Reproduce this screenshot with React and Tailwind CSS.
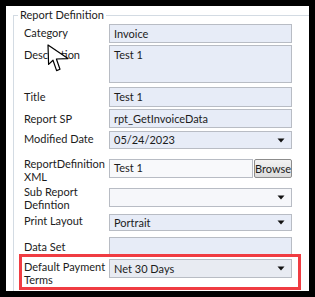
import React from 'react'

const font = { fontFamily: 'Lato, "Noto Sans", sans-serif' }

function Caret() {
  return (
    <svg width="8" height="5" viewBox="0 0 8 5" className="shrink-0">
      <path d="M0.5 0.5 L7.5 0.5 L4 4.5 Z" fill="#111" />
    </svg>
  )
}

function Field({ value, h = 'h-[19px]', bg = 'bg-[#e7ecf7]', dropdown }) {
  return (
    <div className={`flex w-[183px] items-center border border-[#b8bcc4] ${h} ${bg} pl-[4px] pr-[6px] text-[11px] text-[#1c1c1c]`}>
      <span className="flex-1 whitespace-nowrap leading-[14px]">{value}</span>
      {dropdown && <Caret />}
    </div>
  )
}

function Row({ label, labelClass = 'pt-[3px]', className = '', children }) {
  return (
    <div className={`flex ${className}`}>
      <div className={`w-[85px] shrink-0 whitespace-nowrap text-[11px] leading-[12.5px] text-[#1c1c1c] ${labelClass}`}>{label}</div>
      {children}
    </div>
  )
}

function Cursor() {
  return (
    <svg className="absolute left-[41px] top-[38px]" width="23" height="29" viewBox="-1 -1 23 29">
      <path
        d="M0 0 L0.6 19.4 L5 15.2 L8.6 25.6 L12 24.3 L8.4 14 L20 13.6 Z"
        fill="#fff"
        stroke="#000"
        strokeWidth="1.2"
        strokeLinejoin="round"
      />
    </svg>
  )
}

export default function App() {
  return (
    <div className="w-[315px] h-[297px] bg-black pt-[6px] pl-[6px] pr-[6px] pb-[6px] overflow-hidden" style={font}>
      <div className="relative h-[285px] w-[303px] bg-white pl-[7px] pt-[9px] overflow-hidden">
        {/* group box */}
        <div className="relative h-[300px] border-l border-t border-[#d3dbe3]">
          <div className="absolute -top-[8px] left-[4px] bg-white px-[2px] text-[11px] leading-[14px] text-[#1c1c1c]">
            Report Definition
          </div>
          <div className="pl-[10px] pt-[8px] flex flex-col">
            <Row label="Category">
              <Field value="Invoice" />
            </Row>
            <Row label="Description" labelClass="pt-[4px]" className="mt-[2px]">
              <div className="w-[183px] h-[38px] border border-[#b8bcc4] bg-[#e7ecf7] pl-[4px] pt-[3px] text-[11px] leading-[12px] text-[#1c1c1c]">
                Test 1
              </div>
            </Row>
            <Row label="Title" className="mt-[4px]" labelClass="pt-[4px]">
              <Field value="Test 1" h="h-[20px]" />
            </Row>
            <Row label="Report SP" className="mt-[2px]" labelClass="pt-[4px]">
              <Field value="rpt_GetInvoiceData" />
            </Row>
            <Row label="Modified Date" className="mt-[3px]" labelClass="pt-[2px]">
              <Field value="05/24/2023" h="h-[18px]" dropdown />
            </Row>
            <Row label={<>ReportDefinition<br />XML</>} className="mt-[10px] h-[19px]" labelClass="-mt-[1px]">
              <div className="flex w-[183px] h-[19px]">
                <div className="flex-1 border border-[#b8bcc4] bg-[#f8f9fb] pl-[4px] flex items-center text-[11px] text-[#1c1c1c]">
                  Test 1
                </div>
                <button className="ml-[1px] w-[38px] h-[19px] rounded-[2px] border border-[#8c8c8c] bg-gradient-to-b from-[#f2f2f2] to-[#dcdcdc] text-[11px] leading-[12px] text-[#1c1c1c]">
                  Browse
                </button>
              </div>
            </Row>
            <Row label={<>Sub Report<br />Defintion</>} className="mt-[10px] h-[19px]" labelClass="-mt-[2px]">
              <Field value="" bg="bg-[#f6f7fa]" dropdown />
            </Row>
            <Row label="Print Layout" className="mt-[7px]" labelClass="pt-[1px]">
              <Field value="Portrait" h="h-[17px]" dropdown />
            </Row>
            <Row label="Data Set" className="mt-[6px]" labelClass="pt-[4px]">
              <Field value="" h="h-[18px]" />
            </Row>
            <div className="-ml-[5px] -mt-[1px] w-[282px] border-[3px] border-[#f03c42] pl-[2px] pt-[2px] pb-[9px]">
              <Row label={<>Default Payment<br />Terms</>} className="h-[19px]" labelClass="pt-[2px]">
                <Field value="Net 30 Days" bg="bg-[#e8ebf2]" dropdown />
              </Row>
            </div>
          </div>
        </div>
        <Cursor />
      </div>
    </div>
  )
}
